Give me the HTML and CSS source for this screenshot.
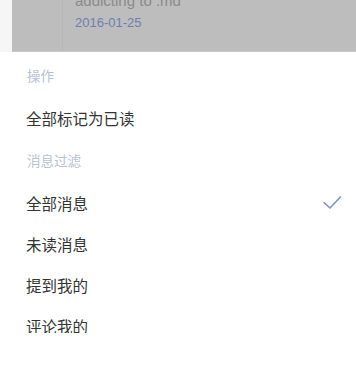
FILE: index.html
```html
<!DOCTYPE html>
<html lang="zh">
<head>
<meta charset="utf-8">
<link rel="stylesheet" href="styles.css">
</head>
<body>
<div class="backdrop">
  <div class="card">
    <div class="gutter"></div>
    <div class="card-body">
      <div class="title">addicting to .md</div>
      <div class="date">2016-01-25</div>
    </div>
  </div>
</div>
<div class="sheet">
  <div class="head head-first">操作</div>
  <div class="item">全部标记为已读</div>
  <div class="head head-second">消息过滤</div>
  <div class="item">
    <span>全部消息</span>
    <svg class="check" width="20" height="16" viewBox="0 0 20 16"><polyline points="2,7.5 8,13 18.5,2" fill="none" stroke="#7b8fbb" stroke-width="1.5" stroke-linecap="round" stroke-linejoin="round"/></svg>
  </div>
  <div class="item">未读消息</div>
  <div class="item">提到我的</div>
  <div class="item">评论我的</div>
</div>
</body>
</html>
```
FILE: styles.css
```css
html, body {
  margin: 0;
  padding: 0;
  background: #ffffff;
}
body {
  width: 356px;
  height: 367px;
  overflow: hidden;
  font-family: "Noto Sans CJK SC", "Noto Sans", sans-serif;
}
.backdrop {
  height: 52px;
  padding-left: 12px;
  background: #f6f6f6;
}
.card {
  height: 52px;
  background: #bdbdbd;
  display: flex;
  border-bottom: 1px solid #c9c9c9;
  box-sizing: border-box;
}
.gutter {
  width: 50px;
  border-right: 1px solid #b6b6b8;
}
.card-body {
  padding-left: 12px;
  font-family: "Liberation Sans", Arial, sans-serif;
  position: relative;
  overflow: hidden;
  flex: 1;
}
.title {
  margin-top: -8px;
  font-size: 15px;
  line-height: 18px;
  color: #8b8b8b;
}
.date {
  margin-top: 5px;
  font-size: 13px;
  line-height: 15px;
  color: #6d80ad;
}
.sheet {
  height: 281px;
  overflow: hidden;
}
.head {
  padding-left: 27px;
  font-size: 13.5px;
  color: #b7c2d2;
  display: flex;
  align-items: center;
}
.head-first {
  height: 45px;
}
.head-second {
  height: 44px;
}
.item {
  height: 41px;
  padding-left: 26px;
  padding-right: 14px;
  font-size: 15.5px;
  color: #333333;
  display: flex;
  align-items: center;
  justify-content: space-between;
}
.check {
  display: block;
}
```
